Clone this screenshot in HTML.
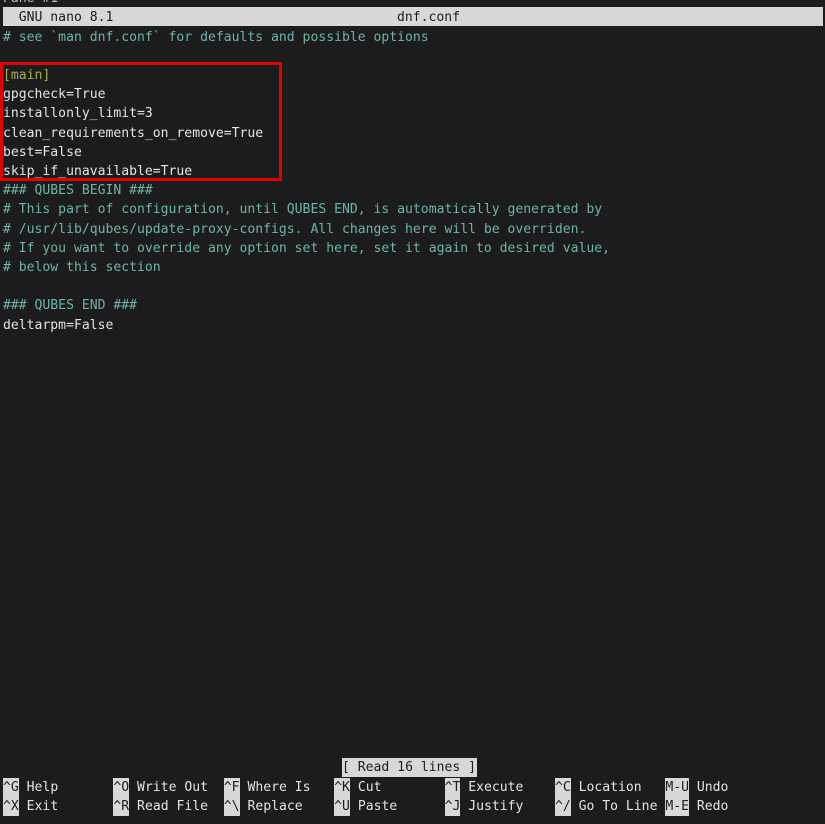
<!DOCTYPE html>
<html><head><meta charset="utf-8"><style>
html,body{margin:0;padding:0;background:#1c1c1c;width:825px;height:824px;overflow:hidden}
.l{position:absolute;left:3px;height:19.2px;line-height:19.2px;font-family:"DejaVu Sans Mono","Liberation Mono",monospace;font-size:13.1px;color:#e4e4e4;white-space:pre}
.c{color:#6fb3aa}
.g{color:#a3b04e}
.inv{background:#d8d8d8;color:#1c1c1c}
.k{display:inline-block;height:19px;vertical-align:top}
</style></head><body>
<div class="l" style="top:-11px;color:#bbb">Pane #1</div>
<div style="position:absolute;left:3px;top:7px;width:820px;height:19px;background:#d8d8d8"></div>
<div class="l" style="top:7.5px;color:#1c1c1c">  GNU nano 8.1</div>
<div class="l" style="top:7.5px;left:397px;color:#1c1c1c">dnf.conf</div>
<div class="l c" style="top:27.5px"># see `man dnf.conf` for defaults and possible options</div>
<div class="l g" style="top:65.9px">[main]</div>
<div class="l" style="top:85.1px">gpgcheck=True</div>
<div class="l" style="top:104.3px">installonly_limit=3</div>
<div class="l" style="top:123.5px">clean_requirements_on_remove=True</div>
<div class="l" style="top:142.7px">best=False</div>
<div class="l" style="top:161.9px">skip_if_unavailable=True</div>
<div class="l c" style="top:181.1px">### QUBES BEGIN ###</div>
<div class="l c" style="top:200.3px"># This part of configuration, until QUBES END, is automatically generated by</div>
<div class="l c" style="top:219.5px"># /usr/lib/qubes/update-proxy-configs. All changes here will be overriden.</div>
<div class="l c" style="top:238.7px"># If you want to override any option set here, set it again to desired value,</div>
<div class="l c" style="top:257.9px"># below this section</div>
<div class="l c" style="top:296.3px">### QUBES END ###</div>
<div class="l" style="top:315.5px">deltarpm=False</div>
<div style="position:absolute;left:0;top:62px;width:276px;height:113px;border:3px solid #e00000"></div>
<div class="l inv" style="top:758px;left:342px;width:135px">[ Read 16 lines ]</div>
<div class="l" style="top:777.5px"><span class="inv k">^G</span> Help       <span class="inv k">^O</span> Write Out  <span class="inv k">^F</span> Where Is   <span class="inv k">^K</span> Cut        <span class="inv k">^T</span> Execute    <span class="inv k">^C</span> Location   <span class="inv k">M-U</span> Undo</div>
<div class="l" style="top:796.7px"><span class="inv k">^X</span> Exit       <span class="inv k">^R</span> Read File  <span class="inv k">^\</span> Replace    <span class="inv k">^U</span> Paste      <span class="inv k">^J</span> Justify    <span class="inv k">^/</span> Go To Line <span class="inv k">M-E</span> Redo</div>
</body></html>
